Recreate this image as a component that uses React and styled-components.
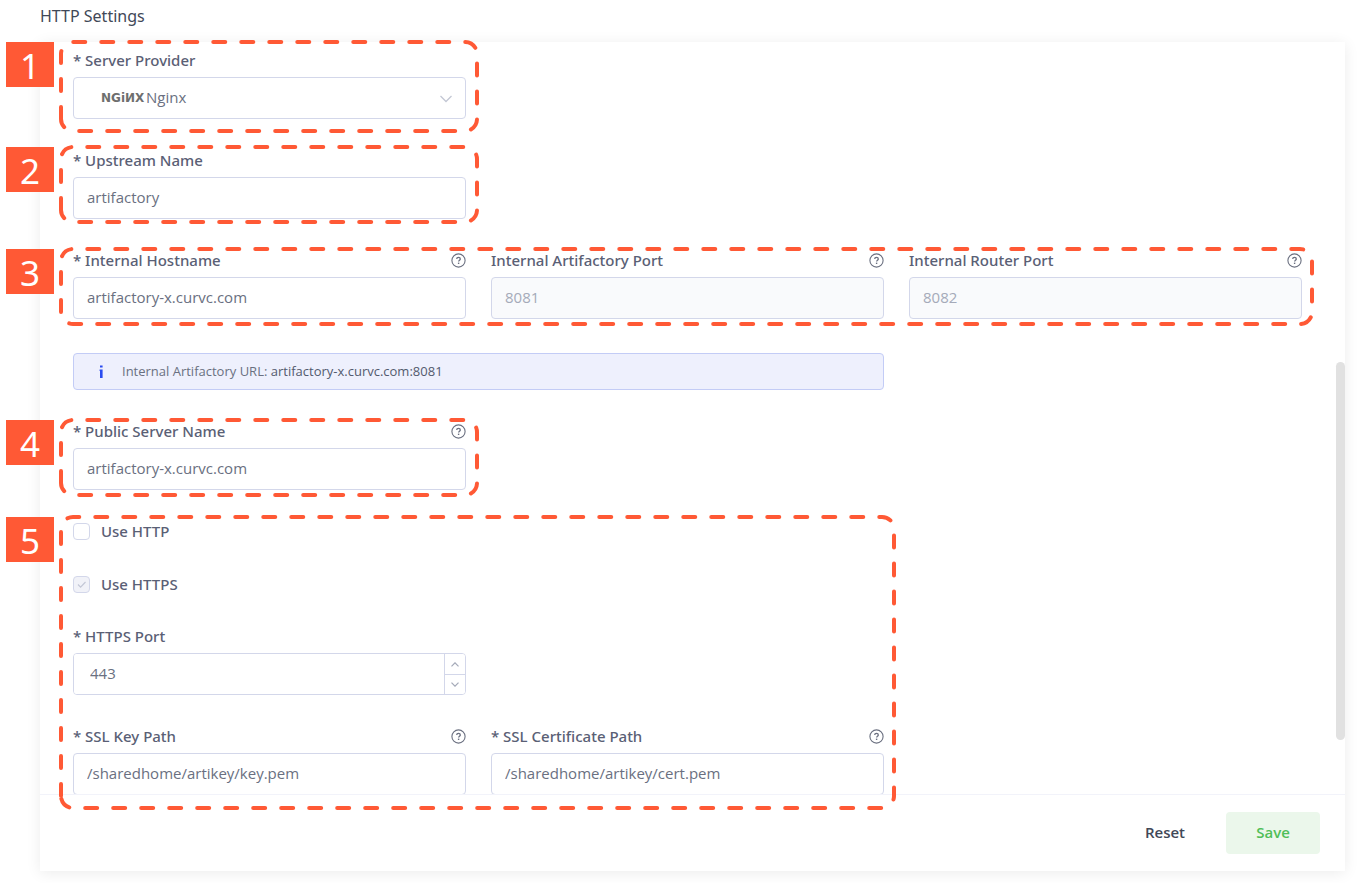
import React, { useLayoutEffect, useRef, useState } from 'react';
import styled, { createGlobalStyle } from 'styled-components';

const GlobalStyle = createGlobalStyle`
  * {
    box-sizing: border-box;
  }

  body {
    margin: 0;
    background: #fff;
    color: #5a6075;
    font-family: 'Open Sans', 'Noto Sans', sans-serif;
    font-size: 15px;
  }

  input, select, button {
    font: inherit;
    color: inherit;
  }
`;

const Page = styled.main`
  padding: 0 16px 12px 40px;
`;

const Title = styled.h1`
  margin: 0;
  padding-bottom: 10px;
  font-family: 'Noto Sans', sans-serif;
  font-size: 16px;
  font-weight: 400;
  line-height: 32px;
  color: #414857;
`;

const Card = styled.section`
  background: #fff;
  box-shadow: 0 2px 14px rgba(0, 0, 0, 0.08);
`;

const Body = styled.div`
  position: relative;
  padding: 7px 43px 0 33px;
`;

const ScrollThumb = styled.div`
  position: absolute;
  top: 320px;
  right: 0;
  width: 9px;
  height: 378px;
  border-radius: 5px;
  background: #e1e1e1;
`;

const Form = styled.form`
  display: grid;
  grid-template-columns: repeat(3, 1fr);
  gap: 30px 25px;
`;

const Group = styled.div`
  position: relative;
  grid-column: 1 / span ${(p) => p.$cols || 1};
  display: grid;
  grid-template-columns: repeat(${(p) => p.$cols || 1}, 1fr);
  gap: 30px 25px;
`;

const FieldBox = styled.div`
  grid-column-start: ${(p) => (p.$first ? 1 : 'auto')};
  display: flex;
  flex-direction: column;
  gap: 5px;
`;

const LabelRow = styled.div`
  display: flex;
  align-items: center;
  justify-content: space-between;
  height: 23px;
`;

const Label = styled.label`
  font-family: 'Noto Sans', sans-serif;
  font-weight: 500;
  line-height: 23px;
`;

const Input = styled.input`
  width: 100%;
  height: 42px;
  padding: 0 13px 2px;
  border: 1px solid #d3d7ea;
  border-radius: 4px;
  background: #fff;
  color: #6a7081;
  outline: none;

  &:disabled {
    background: #f9fafc;
    color: #a5aab9;
  }
`;

const SelectBox = styled.div`
  position: relative;
`;

const Select = styled.select`
  width: 100%;
  height: 42px;
  padding: 0 40px 2px 72px;
  border: 1px solid #d3d7ea;
  border-radius: 4px;
  background: #fff;
  color: #6a7081;
  appearance: none;
  outline: none;
`;

const NginxMark = styled.span`
  position: absolute;
  top: 0;
  left: 28px;
  font-family: 'DejaVu Sans', sans-serif;
  font-size: 12px;
  font-weight: 700;
  line-height: 42px;
  color: #6e6e6e;
  pointer-events: none;
`;

const SelectArrow = styled.svg`
  position: absolute;
  top: 18px;
  right: 13px;
  pointer-events: none;
`;

const NumberBox = styled.div`
  display: flex;
  height: 42px;
  border: 1px solid #d3d7ea;
  border-radius: 4px;
  overflow: hidden;
`;

const NumberInput = styled.input`
  flex: 1;
  min-width: 0;
  padding: 0 16px 2px;
  border: 0;
  background: #fff;
  color: #6a7081;
  appearance: textfield;
  outline: none;

  &::-webkit-inner-spin-button {
    appearance: none;
    margin: 0;
  }
`;

const Steps = styled.div`
  display: grid;
  grid-template-rows: 1fr 1fr;
  width: 21px;
  border-left: 1px solid #d3d7ea;
`;

const Step = styled.button`
  display: flex;
  align-items: center;
  justify-content: center;
  padding: 0;
  border: 0;
  background: #fff;
  cursor: pointer;

  & + & {
    border-top: 1px solid #d3d7ea;
  }
`;

const Checks = styled.div`
  grid-column: 1 / -1;
  display: flex;
  flex-direction: column;
  gap: 30px;
  margin-bottom: -1px;
`;

const CheckLabel = styled.label`
  display: flex;
  align-items: center;
  gap: 11px;
  height: 23px;
  font-family: 'Noto Sans', sans-serif;
  font-weight: 500;
  line-height: 23px;
`;

const Checkbox = styled.input`
  appearance: none;
  width: 17px;
  height: 17px;
  margin: 0;
  border: 1px solid #d3d7ea;
  border-radius: 4px;
  background: #fff;

  &:checked {
    background: #f1f2f8
      url("data:image/svg+xml,%3Csvg xmlns='http://www.w3.org/2000/svg' viewBox='0 0 15 15'%3E%3Cpath d='M4 7.5l2.6 2.7L11.5 5' fill='none' stroke='%23c3c7d6' stroke-width='1.2'/%3E%3C/svg%3E")
      center / 15px no-repeat;
  }
`;

const Info = styled.div`
  grid-column: 1 / span 2;
  display: flex;
  align-items: center;
  height: 37px;
  margin-top: 4px;
  padding: 0 24px 1px;
  border: 1px solid #c3ccf6;
  border-radius: 4px;
  background: #eef0fd;
  font-size: 13px;
  color: #6a7081;

  svg {
    margin-right: 18px;
  }

  strong {
    font-weight: 500;
    color: #535a6e;
  }
`;

const Footer = styled.footer`
  position: relative;
  display: flex;
  align-items: center;
  justify-content: flex-end;
  gap: 14px;
  height: 77px;
  margin-top: -1px;
  padding-right: 25px;
  border-top: 1px solid #f2f3fa;
  background: #fff;
`;

const Button = styled.button`
  width: 94px;
  height: 42px;
  padding: 0 0 2px;
  border: 0;
  border-radius: 4px;
  background: ${(p) => (p.$primary ? '#ebf7eb' : 'transparent')};
  color: ${(p) => (p.$primary ? '#4fbe58' : '#414857')};
  font-weight: 600;
  cursor: pointer;
`;

const MarkerBox = styled.div`
  position: absolute;
  z-index: 2;
  top: ${(p) => -p.$top}px;
  right: ${(p) => -p.$right}px;
  bottom: ${(p) => -p.$bottom}px;
  left: -14px;
  pointer-events: none;

  svg {
    display: block;
    position: absolute;
    overflow: visible;
  }
`;

const Badge = styled.span`
  position: absolute;
  top: 2px;
  left: -53px;
  width: 48px;
  height: 45px;
  background: #ff5935;
  color: #fff;
  font-family: 'Noto Sans', sans-serif;
  font-size: 35px;
  line-height: 47px;
  text-align: center;
`;

// Numbered dashed outline, traced clockwise from the bottom left corner
const Marker = ({ number, top, right = 13, bottom }) => {
  const box = useRef(null);
  const [size, setSize] = useState({ w: 0, h: 0 });

  useLayoutEffect(() => {
    const measure = () =>
      setSize({ w: box.current.offsetWidth, h: box.current.offsetHeight });
    measure();
    const observer = new ResizeObserver(measure);
    observer.observe(box.current);
    return () => observer.disconnect();
  }, []);

  const r = 12;
  const w = size.w - 2;
  const h = size.h - 2;
  const path = `M2 ${h - r}V${2 + r}A${r} ${r} 0 0 1 ${2 + r} 2H${w - r}A${r} ${r} 0 0 1 ${w} ${2 + r}V${h - r}A${r} ${r} 0 0 1 ${w - r} ${h}H${2 + r}A${r} ${r} 0 0 1 2 ${h - r}`;

  return (
    <MarkerBox ref={box} $top={top} $right={right} $bottom={bottom}>
      {size.w > 0 && (
        <svg width={size.w} height={size.h} aria-hidden="true">
          <path
            d={path}
            fill="none"
            stroke="#ff5935"
            strokeWidth="4"
            strokeLinecap="round"
            strokeDasharray="12 16"
          />
        </svg>
      )}
      <Badge>{number}</Badge>
    </MarkerBox>
  );
};

const HelpIcon = () => (
  <svg width="15" height="15" viewBox="0 0 15 15" fill="none" stroke="#6b7080" role="img" aria-label="Help">
    <circle cx="7.5" cy="7.5" r="6.6" strokeWidth="1.1" />
    <path d="M5.7 6.1c0-1.1.8-1.7 1.8-1.7s1.8.6 1.8 1.5c0 1.2-1.7 1.3-1.7 2.6" strokeWidth="1.3" />
    <path d="M7.6 9.6v1.4" strokeWidth="1.4" />
  </svg>
);

const Chevron = ({ up }) => (
  <svg width="8" height="5" viewBox="0 0 8 5" fill="none" stroke="#a4a9b8" strokeWidth="1.2" aria-hidden="true">
    <path d={up ? 'M.5 4.3L4 .8l3.5 3.5' : 'M.5.7L4 4.2 7.5.7'} />
  </svg>
);

const Field = ({ id, label, help, first, children }) => (
  <FieldBox $first={first}>
    <LabelRow>
      <Label htmlFor={id}>{label}</Label>
      {help && <HelpIcon />}
    </LabelRow>
    {children}
  </FieldBox>
);

const App = () => {
  const [upstream, setUpstream] = useState('artifactory');
  const [hostname, setHostname] = useState('artifactory-x.curvc.com');
  const [serverName, setServerName] = useState('artifactory-x.curvc.com');
  const [useHttp, setUseHttp] = useState(false);
  const [port, setPort] = useState(443);
  const [keyPath, setKeyPath] = useState('/sharedhome/artikey/key.pem');
  const [certPath, setCertPath] = useState('/sharedhome/artikey/cert.pem');

  return (
    <>
      <GlobalStyle />
      <Page>
        <Title>HTTP Settings</Title>
        <Card>
          <Body>
            <Form id="http-settings" onSubmit={(e) => e.preventDefault()}>
              <Group>
                <Field id="provider" label="* Server Provider">
                  <SelectBox>
                    <Select id="provider" defaultValue="nginx">
                      <option value="nginx">Nginx</option>
                      <option value="apache">Apache</option>
                    </Select>
                    <NginxMark aria-hidden="true">NGiИX</NginxMark>
                    <SelectArrow width="14" height="8" viewBox="0 0 14 8" fill="none" stroke="#c3c7d4" strokeWidth="1.3">
                      <path d="M1.5 1l5.5 5.5L12.5 1" />
                    </SelectArrow>
                  </SelectBox>
                </Field>
                <Marker number={1} top={9} bottom={14} />
              </Group>

              <Group>
                <Field id="upstream" label="* Upstream Name">
                  <Input id="upstream" value={upstream} onChange={(e) => setUpstream(e.target.value)} />
                </Field>
                <Marker number={2} top={4} bottom={5} />
              </Group>

              <Group $cols={3}>
                <Field id="hostname" label="* Internal Hostname" help>
                  <Input id="hostname" value={hostname} onChange={(e) => setHostname(e.target.value)} />
                </Field>
                <Field id="artifactory-port" label="Internal Artifactory Port" help>
                  <Input id="artifactory-port" value="8081" disabled readOnly />
                </Field>
                <Field id="router-port" label="Internal Router Port" help>
                  <Input id="router-port" value="8082" disabled readOnly />
                </Field>
                <Marker number={3} top={2} right={12} bottom={7} />
              </Group>

              <Info>
                <svg width="6" height="13" viewBox="0 0 6 13" fill="#2a4cf0" aria-hidden="true">
                  <path d="M2 .4h2.6v2H2zM1.6 4.6h3V13H2V6h-.4z" />
                </svg>
                <span>
                  Internal Artifactory URL: <strong>{hostname}:8081</strong>
                </span>
              </Info>

              <Group>
                <Field id="server-name" label="* Public Server Name" help>
                  <Input id="server-name" value={serverName} onChange={(e) => setServerName(e.target.value)} />
                </Field>
                <Marker number={4} top={2} bottom={7} />
              </Group>

              <Group $cols={2}>
                <Checks>
                  <CheckLabel>
                    <Checkbox type="checkbox" checked={useHttp} onChange={(e) => setUseHttp(e.target.checked)} />
                    Use HTTP
                  </CheckLabel>
                  <CheckLabel>
                    <Checkbox type="checkbox" checked disabled readOnly />
                    Use HTTPS
                  </CheckLabel>
                </Checks>
                <Field id="https-port" label="* HTTPS Port">
                  <NumberBox>
                    <NumberInput
                      id="https-port"
                      type="number"
                      value={port}
                      onChange={(e) => setPort(Number(e.target.value))}
                    />
                    <Steps>
                      <Step type="button" aria-label="Increase port" onClick={() => setPort(port + 1)}>
                        <Chevron up />
                      </Step>
                      <Step type="button" aria-label="Decrease port" onClick={() => setPort(port - 1)}>
                        <Chevron />
                      </Step>
                    </Steps>
                  </NumberBox>
                </Field>
                <Field id="key-path" label="* SSL Key Path" help first>
                  <Input id="key-path" value={keyPath} onChange={(e) => setKeyPath(e.target.value)} />
                </Field>
                <Field id="cert-path" label="* SSL Certificate Path" help>
                  <Input id="cert-path" value={certPath} onChange={(e) => setCertPath(e.target.value)} />
                </Field>
                <Marker number={5} top={5} right={12} bottom={15} />
              </Group>
            </Form>
            <ScrollThumb />
          </Body>
          <Footer>
            <Button type="reset" form="http-settings">Reset</Button>
            <Button type="submit" form="http-settings" $primary>Save</Button>
          </Footer>
        </Card>
      </Page>
    </>
  );
};

export default App;
